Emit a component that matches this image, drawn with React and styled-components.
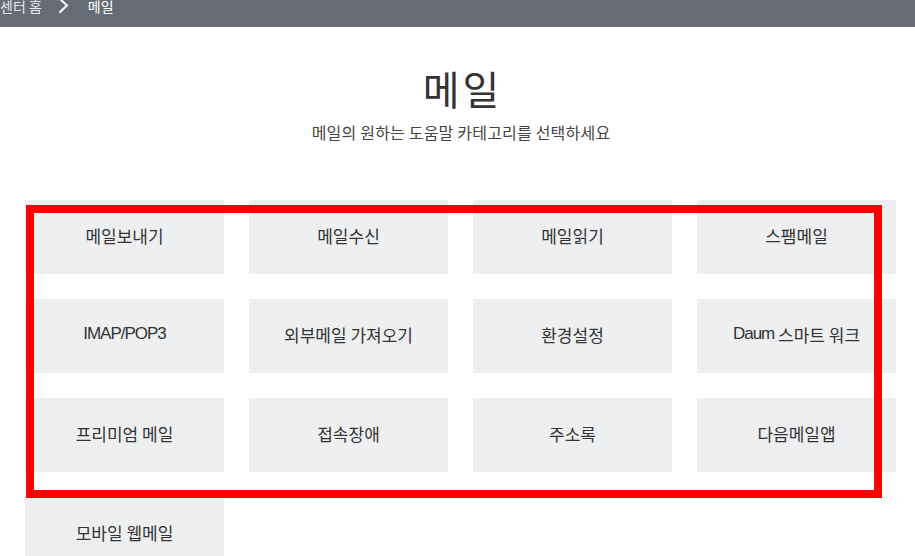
import React from "react";
import styled, { createGlobalStyle } from "styled-components";

const Global = createGlobalStyle`
  html, body { margin: 0; padding: 0; background: #fff; }
  body {
    font-family: "Noto Sans CJK KR", "Noto Sans", sans-serif;
    color: #333;
    overflow: hidden;
  }
`;

const Page = styled.div`
  position: relative;
  width: 915px;
  height: 556px;
  overflow: hidden;
`;

const Bar = styled.div`
  height: 27px;
  box-sizing: border-box;
  padding-bottom: 15px;
  background: #666b76;
  display: flex;
  align-items: center;
`;

const Crumb = styled.span`
  font-size: 14px;
  line-height: 12px;
  color: ${(p) => (p.$current ? "#fff" : "#e6e8ec")};
  white-space: nowrap;
`;

const Chevron = styled.svg`
  width: 11px;
  height: 16px;
  margin: 0 19px 0 16px;
  flex: none;
`;

const Header = styled.header`
  height: 173px;
  box-sizing: border-box;
  display: flex;
  flex-direction: column;
  align-items: center;
  padding: 37px 0 0 7px;
`;

const Title = styled.h1`
  margin: 0;
  font-size: 40px;
  font-weight: 400;
  line-height: 48px;
  letter-spacing: 3px;
  text-indent: 3px;
  color: #333;
`;

const Subtitle = styled.p`
  margin: 9px 0 0;
  font-size: 16px;
  line-height: 22px;
  letter-spacing: 0.2px;
  color: #444;
`;

const Grid = styled.ul`
  list-style: none;
  margin: 0;
  padding: 0 19px 0 25px;
  display: grid;
  grid-template-columns: repeat(4, 199px);
  grid-auto-rows: 74px;
  gap: 25px;
`;

const Tile = styled.li`
  background: #eeeff1;
  display: flex;
  align-items: center;
  justify-content: center;
  box-sizing: border-box;
  padding-bottom: 4px;
  font-size: 17px;
  color: #333;
  white-space: pre;
`;

const Latin = styled.span`
  font-family: "Liberation Sans", Arial, sans-serif;
  letter-spacing: -1px;
`;

const Highlight = styled.div`
  position: absolute;
  left: 26px;
  top: 205px;
  width: 856px;
  height: 293px;
  box-sizing: border-box;
  border: 8px solid #ff0000;
  pointer-events: none;
`;

const items = [
  "메일보내기",
  "메일수신",
  "메일읽기",
  "스팸메일",
  "IMAP/POP3",
  "외부메일 가져오기",
  "환경설정",
  "Daum 스마트 워크",
  "프리미엄 메일",
  "접속장애",
  "주소록",
  "다음메일앱",
  "모바일 웹메일",
];

function renderLabel(text) {
  return text
    .split(/([A-Za-z0-9/]+)/)
    .filter(Boolean)
    .map((part, i) =>
      /[A-Za-z0-9]/.test(part) ? <Latin key={i}>{part}</Latin> : part
    );
}

export default function App() {
  return (
    <Page>
      <Global />
      <Bar>
        <Crumb>센터 홈</Crumb>
        <Chevron viewBox="0 0 11 16" aria-hidden="true">
          <path d="M1.5 0.5 L9 7.5 L1.5 14.5" fill="none" stroke="#fff" strokeWidth="2" />
        </Chevron>
        <Crumb $current>메일</Crumb>
      </Bar>
      <Header>
        <Title>메일</Title>
        <Subtitle>메일의 원하는 도움말 카테고리를 선택하세요</Subtitle>
      </Header>
      <Grid>
        {items.map((t) => (
          <Tile key={t}>{renderLabel(t)}</Tile>
        ))}
      </Grid>
      <Highlight />
    </Page>
  );
}
